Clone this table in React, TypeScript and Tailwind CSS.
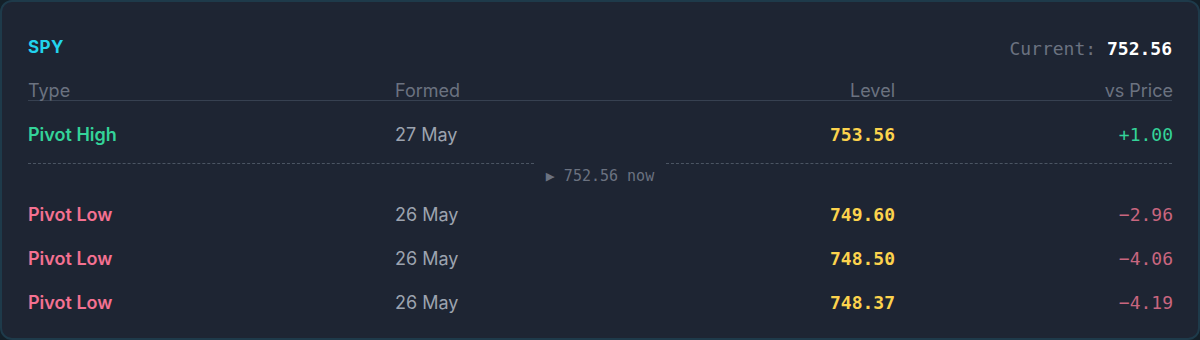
import React from "react";

const sans = { fontFamily: "Inter, 'Noto Sans', sans-serif" };
const mono = { fontFamily: "'DejaVu Sans Mono', 'Liberation Mono', monospace" };

type Row = { type: string; kind: "high" | "low"; formed: string; level: string; diff: string };

const above: Row[] = [{ type: "Pivot High", kind: "high", formed: "27 May", level: "753.56", diff: "+1.00" }];
const below: Row[] = [
  { type: "Pivot Low", kind: "low", formed: "26 May", level: "749.60", diff: "\u22122.96" },
  { type: "Pivot Low", kind: "low", formed: "26 May", level: "748.50", diff: "\u22124.06" },
  { type: "Pivot Low", kind: "low", formed: "26 May", level: "748.37", diff: "\u22124.19" },
];

function DataRow({ r }: { r: Row }) {
  return (
    <div className="grid grid-cols-[367px_222px_278px_278px] items-center h-[44px]">
      <div
        className={`text-[18px] font-semibold ${r.kind === "high" ? "text-[#34d399]" : "text-[#f47191]"}`}
        style={sans}
      >
        {r.type}
      </div>
      <div className="text-[18px] text-[#9ca3af]" style={sans}>
        {r.formed}
      </div>
      <div className="text-right text-[18px] font-bold text-[#fcd34d]" style={mono}>
        {r.level}
      </div>
      <div
        className={`text-right text-[18px] ${r.kind === "high" ? "text-[#34d399]" : "text-[#c8667f]"}`}
        style={mono}
      >
        {r.diff}
      </div>
    </div>
  );
}

export default function App() {
  return (
    <div className="w-[1200px] h-[340px] bg-[#142029]">
      <div className="h-full rounded-xl border-2 border-[#1e3a4a] bg-[#1e2533] px-[26px] pt-[33px]">
        <div className="flex items-center justify-between h-[26px]">
          <div className="text-[17px] font-bold text-[#22d3ee] tracking-wide" style={sans}>
            SPY
          </div>
          <div className="text-[18px]" style={mono}>
            <span className="text-[#6b7280]">Current: </span>
            <span className="text-white font-semibold">752.56</span>
          </div>
        </div>
        <div
          className="mt-[21px] grid grid-cols-[367px_222px_278px_278px] items-end leading-[18px] border-b border-[#374151] text-[18px] text-[#6b7280]"
          style={sans}
        >
          <div>Type</div>
          <div>Formed</div>
          <div className="text-right">Level</div>
          <div className="text-right">vs Price</div>
        </div>
        <div className="mt-[11px]">
          {above.map((r, i) => (
            <DataRow key={i} r={r} />
          ))}
        </div>
        <div className="flex items-start h-[36px]">
          <div className="flex-1 mt-[7px] border-t border-dashed border-[#4b5563]" />
          <div className="px-[12px] pt-[11px] text-[15px] text-[#6b7280] leading-[18px]" style={mono}>
            ▶ 752.56 now
          </div>
          <div className="flex-1 mt-[7px] border-t border-dashed border-[#4b5563]" />
        </div>
        <div>
          {below.map((r, i) => (
            <DataRow key={i} r={r} />
          ))}
        </div>
      </div>
    </div>
  );
}
